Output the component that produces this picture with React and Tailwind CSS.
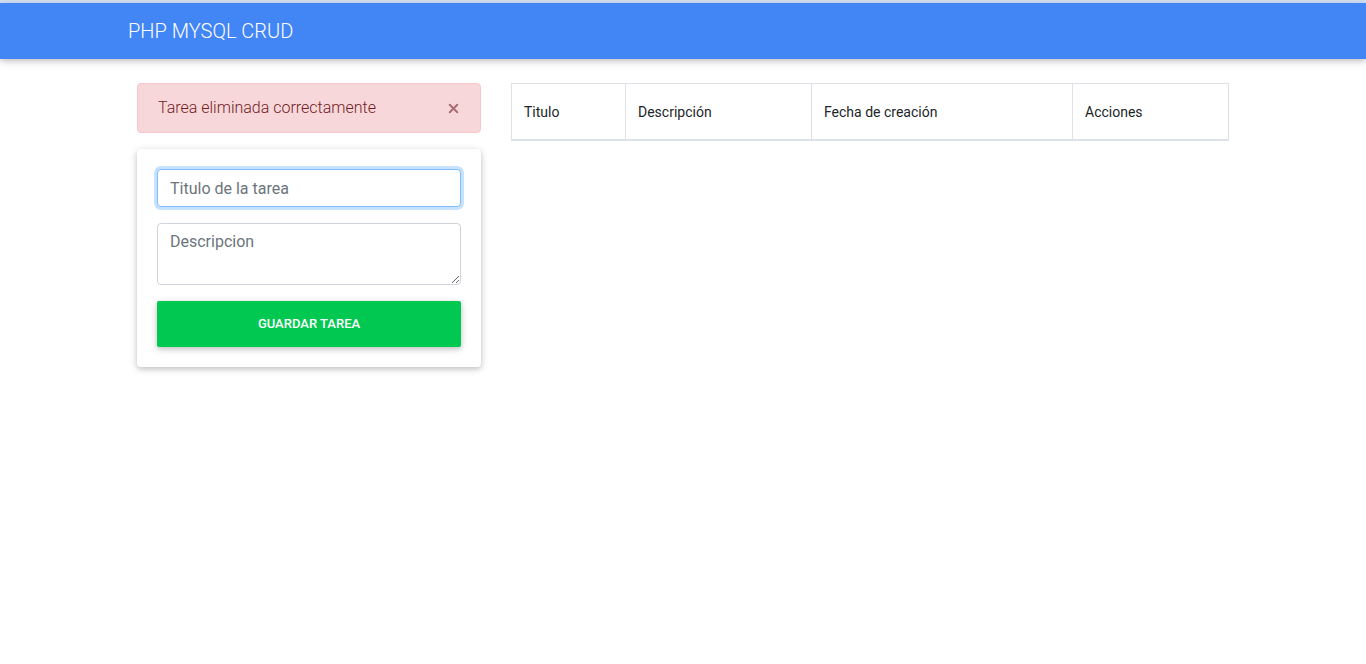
import { X } from "lucide-react";

const columns = [
  { label: "Titulo", width: "w-[114px]" },
  { label: "Descripción", width: "w-[186px]" },
  { label: "Fecha de creación", width: "w-[261px]" },
  { label: "Acciones", width: "w-[156px]" },
];

const App = () => {
  return (
    <div className="min-h-[664px] bg-white font-['Roboto',sans-serif] text-[#212529]">
      {/* top strip */}
      <div className="h-[3px] bg-[#d3e1f5]" />

      {/* ── Navbar ── */}
      <nav className="h-[56px] bg-[#4285f4] shadow-[0_2px_5px_0_rgba(0,0,0,0.16),0_2px_10px_0_rgba(0,0,0,0.12)] relative z-10">
        <div className="w-[1140px] mx-auto px-[15px] h-full flex items-center">
          <a className="text-white text-[20px] font-light">PHP MYSQL CRUD</a>
        </div>
      </nav>

      {/* ── Main ── */}
      <main className="w-[1140px] mx-auto p-6">
        <div className="flex gap-[30px]">
          {/* left column */}
          <div className="w-[344px] flex-shrink-0">
            <div className="h-[50px] flex items-center justify-between pl-[20px] pr-[19px] rounded-[4px] bg-[#f8d7da] border border-[#f5c6cb] text-[#721c24] text-[16px] font-light mb-4">
              <span>Tarea eliminada correctamente</span>
              <X size={15} strokeWidth={3.2} className="text-[#a86c72]" />
            </div>

            <div className="bg-white rounded-[4px] p-5 shadow-[0_2px_5px_0_rgba(0,0,0,0.16),0_2px_10px_0_rgba(0,0,0,0.12)]">
              <div className="mb-4">
                <input
                  type="text"
                  placeholder="Titulo de la tarea"
                  className="w-full h-[38px] px-3 rounded-[4px] border border-[#80bdff] bg-white text-[16px] text-[#495057] placeholder:text-[#6c757d] outline-none shadow-[0_0_0_3px_rgba(0,123,255,0.22)]"
                />
              </div>
              <div className="mb-4">
                <textarea
                  rows={2}
                  placeholder="Descripcion"
                  className="w-full h-[62px] block px-3 py-[6px] rounded-[4px] border border-[#ced4da] bg-white text-[16px] text-[#495057] placeholder:text-[#6c757d] outline-none"
                />
              </div>
              <button className="w-full h-[46px] rounded-[2px] bg-[#00c851] text-white text-[13px] font-medium uppercase shadow-[0_2px_5px_0_rgba(0,0,0,0.16),0_2px_10px_0_rgba(0,0,0,0.12)]">
                Guardar tarea
              </button>
            </div>
          </div>

          {/* right column */}
          <div className="w-[718px]">
            <table className="w-[718px] border-collapse border border-[#dee2e6] table-fixed">
              <thead>
                <tr>
                  {columns.map(({ label, width }) => (
                    <th
                      key={label}
                      className={`${width} h-[56px] px-3 pt-[3px] text-left align-middle text-[14px] font-normal text-[#212529] border border-[#dee2e6] border-b-2`}
                    >
                      {label}
                    </th>
                  ))}
                </tr>
              </thead>
            </table>
          </div>
        </div>
      </main>
    </div>
  );
};

export default App;
